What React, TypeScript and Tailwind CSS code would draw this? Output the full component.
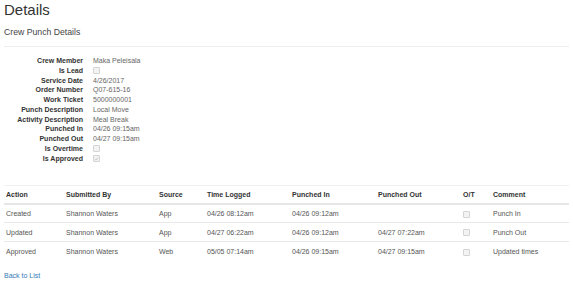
type Field = { label: string; value?: string; check?: boolean; checked?: boolean };

const fields: Field[] = [
  { label: "Crew Member", value: "Maka Peleisala" },
  { label: "Is Lead", check: true },
  { label: "Service Date", value: "4/26/2017" },
  { label: "Order Number", value: "Q07-615-16" },
  { label: "Work Ticket", value: "5000000001" },
  { label: "Punch Description", value: "Local Move" },
  { label: "Activity Description", value: "Meal Break" },
  { label: "Punched In", value: "04/26 09:15am" },
  { label: "Punched Out", value: "04/27 09:15am" },
  { label: "Is Overtime", check: true },
  { label: "Is Approved", check: true, checked: true },
];

type PunchLog = {
  action: string;
  by: string;
  source: string;
  logged: string;
  punchedIn: string;
  punchedOut: string;
  comment: string;
};

const logs: PunchLog[] = [
  { action: "Created", by: "Shannon Waters", source: "App", logged: "04/26 08:12am", punchedIn: "04/26 09:12am", punchedOut: "", comment: "Punch In" },
  { action: "Updated", by: "Shannon Waters", source: "App", logged: "04/27 06:22am", punchedIn: "04/26 09:12am", punchedOut: "04/27 07:22am", comment: "Punch Out" },
  { action: "Approved", by: "Shannon Waters", source: "Web", logged: "05/05 07:14am", punchedIn: "04/26 09:15am", punchedOut: "04/27 09:15am", comment: "Updated times" },
];

const columns = [
  { header: "Action", width: "w-[60px]" },
  { header: "Submitted By", width: "w-[93px]" },
  { header: "Source", width: "w-[48px]" },
  { header: "Time Logged", width: "w-[85px]" },
  { header: "Punched In", width: "w-[86px]" },
  { header: "Punched Out", width: "w-[85px]" },
  { header: "O/T", width: "w-[30px]" },
  { header: "Comment", width: "" },
];

const Box = ({ checked }: { checked?: boolean }) => (
  <span className="inline-flex items-center justify-center w-[7px] h-[7px] rounded-[1px] border border-[#d4d4d4] bg-[#f3f3f3] align-middle">
    {checked && (
      <svg viewBox="0 0 8 8" className="w-[6px] h-[6px]">
        <path d="M1.5 4.2 L3.2 5.8 L6.5 2" fill="none" stroke="#b5b5b5" strokeWidth="1.2" />
      </svg>
    )}
  </span>
);

const App = () => {
  return (
    <div className="w-[573px] h-[285px] bg-white text-[#333] font-['Liberation_Sans',Arial,sans-serif] overflow-hidden">
      <div className="px-[4px]">
        <h2 className="text-[15px] leading-[17px] pt-[1px] font-normal text-[#333]">Details</h2>
        <h4 className="text-[8.7px] leading-[10px] mt-[9px] text-[#444]">Crew Punch Details</h4>
        <hr className="mt-[9px] mx-0 border-t border-[#eee] w-[565px]" />

        <dl className="mt-[9px] grid grid-cols-[79px_1fr] gap-x-[10px] text-[7px] leading-[9.75px]">
          {fields.map((f) => (
            <div key={f.label} className="contents">
              <dt className="text-right font-bold text-[#333]">{f.label}</dt>
              <dd className="text-[#666]">
                {f.check ? <Box checked={f.checked} /> : f.value}
              </dd>
            </div>
          ))}
        </dl>

        <table className="mt-[22px] w-[565px] table-fixed border-collapse text-[7px] leading-[9px]">
          <thead>
            <tr className="border-t border-[#f0f0f0] border-b-2 border-b-[#e6e6e6]">
              {columns.map((c) => (
                <th key={c.header} className={`${c.width} h-[18px] pl-[2px] text-left font-bold text-[#333]`}>
                  {c.header}
                </th>
              ))}
            </tr>
          </thead>
          <tbody>
            {logs.map((l, i) => (
              <tr key={l.action} className={i < logs.length - 1 ? "border-b border-[#e8e8e8]" : ""}>
                <td className="h-[19px] pl-[2px] text-[#555]">{l.action}</td>
                <td className="pl-[2px] text-[#555]">{l.by}</td>
                <td className="pl-[2px] text-[#555]">{l.source}</td>
                <td className="pl-[2px] text-[#555]">{l.logged}</td>
                <td className="pl-[2px] text-[#555]">{l.punchedIn}</td>
                <td className="pl-[2px] text-[#555]">{l.punchedOut}</td>
                <td className="pl-[2px]"><Box /></td>
                <td className="pl-[2px] text-[#555]">{l.comment}</td>
              </tr>
            ))}
          </tbody>
        </table>

        <a href="#" className="block mt-[10px] text-[7px] leading-[9px] text-[#337ab7]">Back to List</a>
      </div>
    </div>
  );
};

export default App;
